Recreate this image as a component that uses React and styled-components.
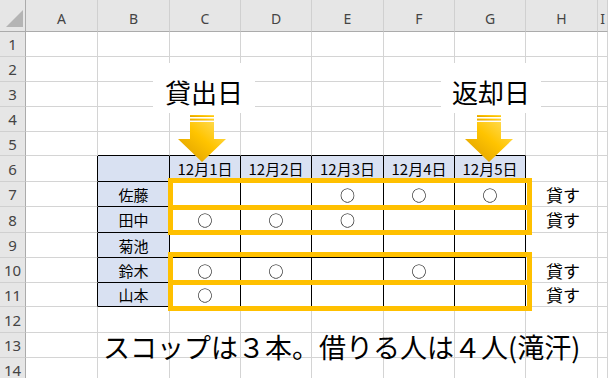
import styled, { createGlobalStyle } from 'styled-components';

const GlobalStyle = createGlobalStyle`
  html, body { margin: 0; padding: 0; background: #fff; }
  body { font-family: "Noto Sans CJK JP", "Noto Sans", sans-serif; }
`;

const LETTERS = ['A', 'B', 'C', 'D', 'E', 'F', 'G', 'H', 'I'];
const COL_W = [72, 72, 71, 71, 72, 71, 71, 72];
const ROW_H = [25, 25, 25, 25, 24, 26, 25, 26, 25, 25, 24, 26, 25, 25];

const DATES = ['12月1日', '12月2日', '12月3日', '12月4日', '12月5日'];
const PEOPLE = [
  { row: 7, name: '佐藤', days: [0, 0, 1, 1, 1], lend: true },
  { row: 8, name: '田中', days: [1, 1, 1, 0, 0], lend: true },
  { row: 9, name: '菊池', days: [0, 0, 0, 0, 0], lend: false },
  { row: 10, name: '鈴木', days: [1, 1, 0, 1, 0], lend: true },
  { row: 11, name: '山本', days: [1, 0, 0, 0, 0], lend: true },
];

// table B6:G11 -> column index 1..6, rows 6..11
const inTable = (r, c) => r >= 6 && r <= 11 && c >= 1 && c <= 6;

function cellOf(r, c) {
  if (r === 6 && c === 1) return { kind: 'head', text: '' };
  if (r === 6 && c >= 2 && c <= 6) return { kind: 'head', text: DATES[c - 2] };
  const p = PEOPLE.find((x) => x.row === r);
  if (!p) return { kind: 'plain', text: '' };
  if (c === 1) return { kind: 'head', text: p.name };
  if (c >= 2 && c <= 6) return { kind: 'mark', text: p.days[c - 2] ? '○' : '' };
  if (c === 7 && p.lend) return { kind: 'lend', text: '貸す' };
  return { kind: 'plain', text: '' };
}

const Sheet = styled.div`
  position: relative;
  width: 608px;
  height: 378px;
  overflow: hidden;
  background: #fff;
`;

const Grid = styled.div`
  display: grid;
  grid-template-columns: 26px ${COL_W.map((w) => `${w}px`).join(' ')} 1fr;
  grid-template-rows: 32px ${ROW_H.map((h) => `${h}px`).join(' ')};
`;

const Corner = styled.div`
  box-sizing: border-box;
  background: #e6e6e6;
  border-right: 1px solid #ababab;
  border-bottom: 1px solid #ababab;
  display: flex;
  justify-content: flex-end;
  align-items: flex-end;
  padding: 0 2px 4px 0;
`;

const Triangle = styled.div`
  width: 17px;
  height: 17px;
  background: #b4b4b4;
  clip-path: polygon(100% 0, 100% 100%, 0 100%);
`;

const ColHead = styled.div`
  box-sizing: border-box;
  background: #e6e6e6;
  border-right: 1px solid #d0d0d0;
  border-bottom: 1px solid #ababab;
  display: flex;
  justify-content: center;
  align-items: center;
  padding-top: 6px;
  font-family: "Noto Sans", sans-serif;
  font-size: 14px;
  color: #444;
`;

const RowHead = styled.div`
  box-sizing: border-box;
  background: #e6e6e6;
  border-right: 1px solid #ababab;
  border-bottom: 1px solid #d0d0d0;
  display: flex;
  justify-content: center;
  align-items: center;
  font-family: "Noto Sans", sans-serif;
  font-size: 15px;
  color: #444;
`;

const Cell = styled.div`
  box-sizing: border-box;
  border-right: 1px solid ${(p) => (p.$edgeR ? '#000' : '#d4d4d4')};
  border-bottom: 1px solid ${(p) => (p.$edgeB ? '#000' : '#d4d4d4')};
  background: ${(p) => (p.$kind === 'head' ? '#d9e1f2' : '#fff')};
  display: flex;
  align-items: center;
  justify-content: ${(p) => (p.$kind === 'lend' ? 'flex-start' : 'center')};
  padding-left: ${(p) => (p.$kind === 'lend' ? '20px' : '0')};
  font-size: ${(p) => (p.$kind === 'lend' ? 17 : 15)}px;
  line-height: 1;
  color: #000;
  white-space: nowrap;
`;

// grey-only rendering keeps the thin ring free of colour fringes
const Mark = styled.span`
  display: inline-block;
  filter: grayscale(1);
`;

/* a floating label with its arrow below it */
const Marker = styled.div`
  position: absolute;
  top: 63px;
  left: ${(p) => p.$left}px;
  width: ${(p) => p.$width}px;
  display: flex;
  flex-direction: column;
  align-items: center;
  gap: 2px;
`;

const Callout = styled.div`
  align-self: stretch;
  height: 50px;
  background: #fff;
  display: flex;
  justify-content: center;
  align-items: center;
  padding-top: 8px;
  box-sizing: border-box;
  font-size: 26px;
  line-height: 1;
  color: #000;
`;

const ArrowBox = styled.div`
  width: 48px;
  height: 47px;
  line-height: 0;
  margin-left: ${(p) => p.$shift || 0}px;
`;

/* the highlight boxes round two rows each, sharing the middle bar */
const FramePair = styled.div`
  position: absolute;
  left: 168px;
  top: ${(p) => p.$top}px;
  width: 364px;
  display: flex;
  flex-direction: column;
`;

const Frame = styled.div`
  height: ${(p) => p.$height}px;
  border: 5px solid #ffc000;
  box-sizing: border-box;
  & + & {
    margin-top: -5px;
  }
`;

const Note = styled.div`
  position: absolute;
  left: 103px;
  top: 333px;
  font-size: 27px;
  line-height: 1;
  color: #000;
  white-space: nowrap;
`;

function DownArrow({ id }) {
  return (
    <svg width="48" height="47" viewBox="0 0 48 47">
      <defs>
        <linearGradient id={id} x1="1" y1="0" x2="0" y2="1">
          <stop offset="0" stopColor="#ffe066" />
          <stop offset="0.45" stopColor="#ffc400" />
          <stop offset="1" stopColor="#d99a00" />
        </linearGradient>
      </defs>
      <g fill={`url(#${id})`}>
        <rect x="12" y="0" width="24" height="2" />
        <rect x="12" y="3.5" width="24" height="2" />
        <path d="M12 7H36V24H48L24 47L0 24H12Z" />
      </g>
    </svg>
  );
}

export default function App() {
  const rows = ROW_H.map((_, i) => i + 1);
  return (
    <Sheet>
      <GlobalStyle />
      <Grid>
        <Corner>
          <Triangle />
        </Corner>
        {LETTERS.map((l) => (
          <ColHead key={l}>{l}</ColHead>
        ))}
        {rows.map((r) => [
          <RowHead key={`h${r}`}>{r}</RowHead>,
          ...LETTERS.map((l, c) => {
            const cell = cellOf(r, c);
            const edgeR = inTable(r, c) || (c === 0 && r >= 6 && r <= 11);
            const edgeB = inTable(r, c) || (r === 5 && c >= 1 && c <= 6);
            return (
              <Cell key={`${l}${r}`} $kind={cell.kind} $edgeR={edgeR} $edgeB={edgeB}>
                {cell.kind === 'mark' && cell.text ? <Mark>{cell.text}</Mark> : cell.text}
              </Cell>
            );
          }),
        ])}
      </Grid>

      <Marker $left={153} $width={102}>
        <Callout>貸出日</Callout>
        <ArrowBox $shift={-4}>
          <DownArrow id="arrowFillStart" />
        </ArrowBox>
      </Marker>
      <Marker $left={441} $width={100}>
        <Callout>返却日</Callout>
        <ArrowBox $shift={-4}>
          <DownArrow id="arrowFillEnd" />
        </ArrowBox>
      </Marker>

      <FramePair $top={178}>
        <Frame $height={32} />
        <Frame $height={30} />
      </FramePair>
      <FramePair $top={252}>
        <Frame $height={33} />
        <Frame $height={31} />
      </FramePair>

      <Note>スコップは３本。借りる人は４人(滝汗)</Note>
    </Sheet>
  );
}
